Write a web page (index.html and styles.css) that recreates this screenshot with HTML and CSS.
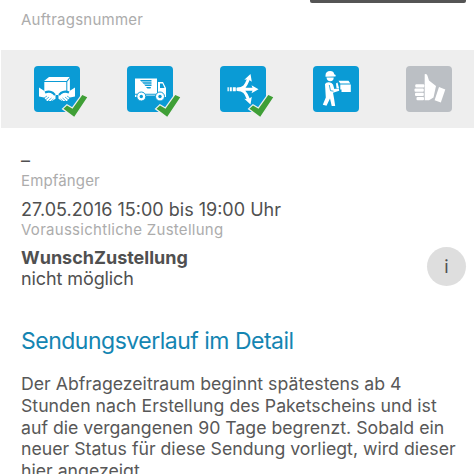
FILE: index.html
```html
<!DOCTYPE html>
<html lang="de">
<head>
<meta charset="utf-8">
<title>Sendungsverfolgung</title>
<link rel="stylesheet" href="styles.css">
</head>
<body>
<main class="page">
  <div class="topbar"></div>
  <p class="label order">Auftragsnummer</p>

  <div class="steps">
    <div class="step">
      <svg class="tile" viewBox="0 0 46 46">
        <g fill="#fff">
          <path d="M10 15l5-4h20.700l-3.200 4z"/>
          <path d="M10.300 16h22v13h-22z"/>
          <path d="M33.300 15.700l2.600-3.400V26h-2.600z"/>
          <path d="M5 21.500l5.500 3.500 8 1.200 3 2.500v4L18 35h-5l-3-3.500-5-1z"/>
          <path d="M41 21.500L35.500 25l-8 1.200-3 2.500v4L28 35h5l3-3.500 5-1z"/>
        </g>
        <g fill="none" stroke="#0a9bd5">
          <path stroke-width="2.200" d="M11 26.500c3-1.500 6-1 8 .5l2 2M35 26.500c-3-1.500-6-1-8 .5l-2 2"/>
          <path stroke-width=".7" d="M10 32l3-2m-1.500 4l3.500-3m-1 4l3.500-3m-.5 3l2.500-2M36 32l-3-2m1.500 4L31 31m1 4l-3.500-3m.5 3l-2.500-2"/>
          <path fill="#0a9bd5" stroke="none" d="M20 36l3-4 3 4z"/>
        </g>
      </svg>
      <svg class="check" viewBox="0 0 26 24"><path d="M1.500 14.800L5 11.500l5.500 3.300L20.300 1l4.900 2.200L12.200 22.800z"/></svg>
    </div>
    <div class="step">
      <svg class="tile" viewBox="0 0 46 46">
        <path fill="#fff" d="M8 12.500h22v15.200H8zM31 16h5l3 6v9h-3a4.200 4.200 0 0 0-7.500-1.500H18A4.200 4.200 0 0 0 10.500 31H8v-2.300h23z"/>
        <path fill="#0a9bd5" d="M33 17.500h2.500l2 4.500H33zM13 14h11.500v1.500H14.300zM15 16.300h9.500v1.500h-8zM17 18.600h7.500v1.500h-6zM19 20.900h5l-.5 1.500h-3z"/>
        <g fill="#fff" stroke="#0a9bd5" stroke-width="1"><circle cx="14.300" cy="30.500" r="4.500"/><circle cx="33" cy="30.500" r="4.500"/></g>
        <circle cx="14.300" cy="30.500" r="1.700" fill="#0a9bd5"/><circle cx="33" cy="30.500" r="1.700" fill="#0a9bd5"/>
      </svg>
      <svg class="check" viewBox="0 0 26 24"><path d="M1.500 14.800L5 11.500l5.500 3.300L20.300 1l4.900 2.200L12.200 22.800z"/></svg>
    </div>
    <div class="step">
      <svg class="tile" viewBox="0 0 46 46">
        <path fill="#fff" d="M7.500 21.300h1.300v4H7.500zM9.800 21.300h2v4h-2zM12.800 21.300h3v4h-3z"/>
        <g fill="none" stroke="#fff" stroke-width="3">
          <path d="M16.500 23.300H34M17 23c8 0 9-4 11.500-10M17 23.600c8 0 9 4 11.500 10"/>
        </g>
        <path fill="#fff" d="M38.500 23.300l-7-4 1.500 4-1.500 4zM30.500 8l-6.200 5.800 4-.5 3.500 2.400zM30.500 38.500l-6.200-5.800 4 .5 3.500-2.400z"/>
      </svg>
      <svg class="check" viewBox="0 0 26 24"><path d="M1.500 14.800L5 11.500l5.500 3.300L20.300 1l4.900 2.200L12.200 22.800z"/></svg>
    </div>
    <div class="step">
      <svg class="tile" viewBox="0 0 46 46">
        <g fill="#fff">
          <path d="M12.500 9.500q0-4.500 4.700-4.500 3.500 0 4 3.300l1.500.7-.2 1.500-10 .2z"/>
          <path d="M13.500 11.500h7.200q0 3.800-3.500 3.800-3.200 0-3.700-3.800z"/>
          <path d="M12 18q1-2 4-1.800 3 .2 4 2.300l1.300 4.500 4.500-.7.4 2.500-6.200 2 1 5.500 1.200 7.700h-3.500L17 32.500l-3.500 7.300-3.700-1 3-7.300z"/>
          <path d="M25.500 14.800h10l1.800 2.700h-10z"/>
          <path d="M27.300 18.500h10.500V26h-9.300v-2.500h-1.200z"/>
          <path d="M23 17.500l1.500-1 1.500 5.500h-2.500z"/>
        </g>
        <path d="M16.300 19l1.200 5.700 3 .5" fill="none" stroke="#0a9bd5" stroke-width=".8"/>
      </svg>
    </div>
    <div class="step pending">
      <svg class="tile" viewBox="0 0 46 46">
        <g fill="#fff">
          <path d="M18.700 8.200q1.700-.7 2.700 1.300l1.600 5 7 5.500-2.500 11.500-4.500 2.800h-4.300V19z"/>
          <rect x="9.300" y="18.200" width="9" height="3.200" rx="1"/>
          <rect x="8.500" y="22.500" width="9.300" height="3.200" rx="1"/>
          <rect x="9" y="26.800" width="8.800" height="3.200" rx="1"/>
          <rect x="10.500" y="31" width="7.500" height="3.300" rx="1"/>
          <path d="M33 21l6.300 2.500-4.500 13-6.200-2.200z"/>
        </g>
      </svg>
    </div>
  </div>

  <p class="value dash">–</p>
  <p class="label recipient">Empfänger</p>
  <p class="value date">27.05.2016 15:00 bis 19:00 Uhr</p>
  <p class="label expected">Voraussichtliche Zustellung</p>

  <div class="wish">
    <div>
      <p class="value strong">WunschZustellung</p>
      <p class="value status">nicht möglich</p>
    </div>
    <span class="info">i</span>
  </div>

  <h2 class="heading">Sendungsverlauf im Detail</h2>
  <p class="details">Der Abfragezeitraum beginnt spätestens ab 4<br>Stunden nach Erstellung des Paketscheins und ist<br>auf die vergangenen 90 Tage begrenzt. Sobald ein<br>neuer Status für diese Sendung vorliegt, wird dieser<br>hier angezeigt.</p>
</main>
</body>
</html>
```
FILE: styles.css
```css
* { box-sizing: border-box; }
body { margin: 0; background: #fff; }
.page {
  width: 474px;
  height: 474px;
  overflow: hidden;
  font-family: Inter, "Liberation Sans", sans-serif;
  color: #505050;
}
p, h2 { margin: 0; white-space: nowrap; }
.topbar {
  height: 3px;
  margin: 0 8px 0 310px;
  border-radius: 0 0 2px 2px;
  background: #555;
}
.label {
  padding-left: 21px;
  font-size: 15px;
  line-height: 20px;
  color: #acacac;
}
.order { margin-top: 7px; letter-spacing: .25px; }
.steps {
  display: flex;
  justify-content: space-between;
  height: 78px;
  margin: 20px 0 0 1px;
  padding: 16px 22px 0 33px;
  background: #eee;
}
.step {
  position: relative;
  flex: none;
  width: 46px;
  height: 46px;
  border-radius: 4px;
  background: #0a9bd5;
}
.pending { background: #bbbfc4; }
.tile { display: block; width: 46px; height: 46px; }
.check {
  position: absolute;
  left: 28px;
  top: 28px;
  width: 26px;
  height: 24px;
  overflow: visible;
  fill: #3f9f36;
  stroke: #eee;
  stroke-width: 2.5;
  paint-order: stroke;
}
.value {
  padding-left: 21px;
  font-size: 18px;
  line-height: 21px;
}
.dash { margin-top: 22px; }
.recipient { margin-top: 0; letter-spacing: .15px; }
.date { margin-top: 8px; }
.expected { letter-spacing: .28px; }
.wish {
  display: flex;
  justify-content: space-between;
  align-items: flex-start;
  margin-top: 7px;
  padding-right: 8px;
}
.strong { font-weight: 700; }
.status { letter-spacing: -.1px; }
.info {
  width: 39px;
  height: 39px;
  border-radius: 50%;
  background: #dedede;
  font-size: 18px;
  line-height: 39px;
  text-align: center;
}
.heading {
  margin-top: 38px;
  padding-left: 21px;
  font-size: 23px;
  letter-spacing: -.5px;
  line-height: 28px;
  font-weight: 400;
  color: #1485b2;
}
.details {
  margin-top: 18px;
  padding-left: 21px;
  font-size: 17.7px;
  line-height: 21.8px;
  color: #585858;
}
```
